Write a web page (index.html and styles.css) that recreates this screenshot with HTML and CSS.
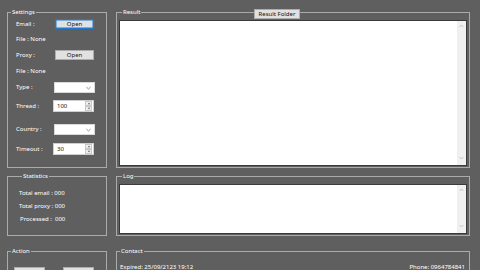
FILE: index.html
```html
<!DOCTYPE html>
<html>
<head>
<meta charset="utf-8">
<link rel="stylesheet" href="styles.css">
</head>
<body>
<div class="app">
  <fieldset class="group settings">
    <legend>Settings</legend>
    <div class="form">
      <span class="lbl">Email :</span><span class="btn focus">Open</span>
      <span class="lbl full">File : None</span>
      <span class="lbl">Proxy :</span><span class="btn">Open</span>
      <span class="lbl full">File : None</span>
      <span class="lbl">Type :</span><span class="combo"><svg class="chev" viewBox="0 0 6 4"><path d="M0.5 0.8 L3 3.2 L5.5 0.8" fill="none" stroke="#555" stroke-width="0.8"/></svg></span>
      <span class="lbl">Thread :</span><span class="num"><span class="val">100</span><span class="spin"><span class="sb"><svg viewBox="0 0 6 4"><path d="M1 3 L3 1 L5 3Z" fill="#606060"/></svg></span><span class="sb"><svg viewBox="0 0 6 4"><path d="M1 1 L3 3 L5 1Z" fill="#606060"/></svg></span></span></span>
      <span class="lbl">Country :</span><span class="combo"><svg class="chev" viewBox="0 0 6 4"><path d="M0.5 0.8 L3 3.2 L5.5 0.8" fill="none" stroke="#555" stroke-width="0.8"/></svg></span>
      <span class="lbl">Timeout :</span><span class="num"><span class="val">30</span><span class="spin"><span class="sb"><svg viewBox="0 0 6 4"><path d="M1 3 L3 1 L5 3Z" fill="#606060"/></svg></span><span class="sb"><svg viewBox="0 0 6 4"><path d="M1 1 L3 3 L5 1Z" fill="#606060"/></svg></span></span></span>
    </div>
  </fieldset>
  <fieldset class="group result">
    <legend>Result</legend>
    <div class="textbox tall">
      <div class="scroll"><svg viewBox="0 0 6 4"><path d="M0.8 3.2 L3 0.8 L5.2 3.2" fill="none" stroke="#a6a6a6" stroke-width="0.7"/></svg><svg viewBox="0 0 6 4"><path d="M0.8 0.8 L3 3.2 L5.2 0.8" fill="none" stroke="#a6a6a6" stroke-width="0.7"/></svg></div>
    </div>
    <span class="btn folder">Result Folder</span>
  </fieldset>
  <fieldset class="group stats row2">
    <legend>Statistics</legend>
    <div class="stat">Total email : 000</div>
    <div class="stat">Total proxy : 000</div>
    <div class="stat p">Processed :&nbsp; 000</div>
  </fieldset>
  <fieldset class="group log row2">
    <legend>Log</legend>
    <div class="textbox short">
      <div class="scroll"><svg viewBox="0 0 6 4"><path d="M0.8 3.2 L3 0.8 L5.2 3.2" fill="none" stroke="#a6a6a6" stroke-width="0.7"/></svg><svg viewBox="0 0 6 4"><path d="M0.8 0.8 L3 3.2 L5.2 0.8" fill="none" stroke="#a6a6a6" stroke-width="0.7"/></svg></div>
    </div>
  </fieldset>
  <fieldset class="group action row3">
    <legend>Action</legend>
    <div class="actions"><span class="btn abtn"></span><span class="btn abtn"></span></div>
  </fieldset>
  <fieldset class="group contact row3">
    <legend>Contact</legend>
    <div class="contactline"><span>Expired: 25/09/2123 19:12</span><span>Phone: 0964784841</span></div>
  </fieldset>
</div>
</body>
</html>
```

FILE: styles.css
```css
html, body {
  margin: 0;
  padding: 0;
  background: #5f5f5f;
  overflow: hidden;
  width: 480px;
  height: 270px;
}
body {
  font-family: "Noto Sans", "Open Sans", sans-serif;
  font-size: 6px;
  color: #ffffff;
}
.app {
  display: grid;
  grid-template-columns: 100px 354px;
  grid-template-rows: 160px 64px 40px;
  column-gap: 9px;
  row-gap: 4px;
  padding: 8px 0 0 7px;
}
.group {
  margin: 0;
  padding: 0;
  min-width: 0;
  border: 1px solid #ababab;
  box-sizing: border-box;
}
.group legend {
  margin-left: 3px;
  padding: 0 1px;
  line-height: 8px;
  height: 8px;
  font-size: 6px;
  color: #fff;
}
.row3 { margin-top: 7px; }

.form {
  display: grid;
  grid-template-columns: 39px 41px;
  grid-template-rows: 16px 14px 18px 14px 18px 20px 26px 14px;
  align-items: center;
  padding-left: 8px;
}
.lbl { line-height: 8px; }
.full { grid-column: 1 / 3; }
.btn {
  display: flex;
  align-items: center;
  justify-content: center;
  background: #e1e1e1;
  border: 1px solid #adadad;
  color: #111;
  box-sizing: border-box;
  height: 10px;
  line-height: 8px;
}
.settings .btn { width: 39px; }
.btn.focus { border-color: #1f7ad6; box-shadow: inset 0 0 0 0.5px #1f7ad6; }
.combo {
  position: relative;
  display: block;
  height: 11px;
  width: 41px;
  margin-left: -1px;
  background: #fff;
  box-sizing: border-box;
  border: 1px solid #d9d9d9;
}
.chev {
  position: absolute;
  right: 3px;
  top: 3px;
  width: 5px;
  height: 4px;
}
.num {
  display: flex;
  height: 12px;
  width: 41px;
  margin-left: -2px;
  background: #fff;
  box-sizing: border-box;
  border: 1px solid #cfcfcf;
  color: #111;
  align-items: center;
}
.num .val { flex: 1; padding-left: 3px; line-height: 8px; }
.spin {
  display: flex;
  flex-direction: column;
  width: 7px;
  height: 10px;
  margin-right: 1px;
}
.sb {
  flex: 1;
  display: flex;
  align-items: center;
  justify-content: center;
  background: #f0f0f0;
  border: 0.5px solid #c8c8c8;
}
.sb svg { width: 4px; height: 3px; }

.result { position: relative; padding: 4px 2px 0 2px; }
.folder {
  position: absolute;
  z-index: 2;
  top: -7px;
  left: 137px;
  width: 46px;
  height: 10px;
}
.textbox {
  position: relative;
  background: #fff;
  border: 1px solid #3a3a3a;
  box-sizing: border-box;
  display: flex;
  justify-content: flex-end;
}
.tall { height: 146px; }
.short { height: 50px; }
.log { padding: 4px 2px 0 2px; }
.scroll {
  width: 9px;
  background: #f0f0f0;
  display: flex;
  flex-direction: column;
  justify-content: space-between;
  align-items: center;
  padding: 3px 0 5px;
}
.scroll svg { width: 5px; height: 4px; }

.stats { padding: 7px 0 0 11px; }
.stat { line-height: 13px; }
.stat.p { padding-left: 1px; }

.actions { display: flex; gap: 18px; padding: 12px 0 0 6px; }
.abtn { width: 31px; height: 12px; }

.contactline {
  display: flex;
  justify-content: space-between;
  padding: 8px 4px 0 3px;
  line-height: 8px;
}
```
